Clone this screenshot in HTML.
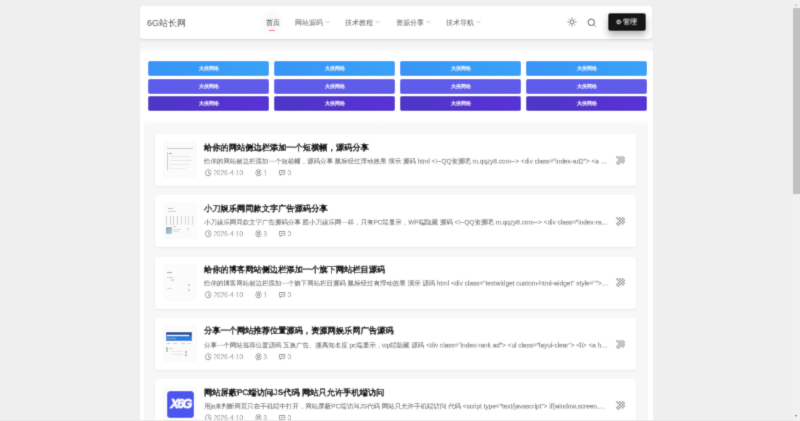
<!DOCTYPE html>
<html><head><meta charset="utf-8">
<style>
*{box-sizing:border-box;margin:0;padding:0}
html,body{width:800px;height:421px;overflow:hidden}
body{background:#efefef;font-family:"Liberation Sans",sans-serif;position:relative;color:#333}
.abs{position:absolute}
.logo,.nav,#btn,.bb,.thumb{will-change:transform}
#header{left:140px;top:6px;width:512px;height:32.5px;background:#fff;border-radius:3px;box-shadow:0 1px 2px rgba(0,0,0,.1)}
#gap{left:140px;top:38px;width:513px;height:10px;background:linear-gradient(#eeeeee,#f4f4f4 60%,#f6f6f6)}
.logo{left:146.5px;top:17px;font-size:9px;line-height:12px;color:#444;white-space:nowrap}
.nav{top:17px;font-size:7px;line-height:12px;color:#555;white-space:nowrap}
.chev{display:inline-block;margin-left:2px;vertical-align:1px}
.glow{left:258px;top:9px;width:28px;height:28px;border-radius:50%;background:radial-gradient(circle,rgba(0,0,0,.05),rgba(0,0,0,0) 70%)}
.uline{left:269px;top:29.5px;width:6px;height:1.2px;background:#e84a6f;border-radius:1px}
#btn{left:608px;top:12.5px;width:37.5px;height:18px;background:#131313;border-radius:3px;box-shadow:0 4px 7px rgba(0,0,0,.3);color:#fff;font-size:6.5px;line-height:18px;text-align:center;white-space:nowrap}
#banner{left:140px;top:48px;width:513px;height:373px;background:linear-gradient(#f6f6f6,#fff 5px);border-radius:3px 3px 0 0}
.bb{position:absolute;width:121px;height:15.3px;border-radius:2px;color:#fff;font-size:4.5px;line-height:15.3px;text-align:center;font-weight:bold}
.r1{background:linear-gradient(90deg,#3894f7,#37a2f8)}
.r2{background:linear-gradient(90deg,#5d5ceb,#605ae8)}
.r3{background:linear-gradient(90deg,#4e37c6,#5a30d6)}
#list{left:144px;top:119px;width:504px;height:302px;background:linear-gradient(#fff,#f7f7f7 6px)}
.card{position:absolute;left:155px;width:481px;height:52px;background:#fff;border-radius:2px;box-shadow:0 1px 2px rgba(0,0,0,.06),0 0 1px rgba(0,0,0,.06)}
.thumb{position:absolute;left:7.5px;top:7px;width:34px;height:37px;background:#fbfbfb;border-radius:2px;overflow:hidden}
.thumb i{position:absolute;display:block;opacity:.7}
.thumb i.s{opacity:1}
.thumb{filter:blur(0.35px)}
.title{position:absolute;left:49px;top:7.5px;font-size:18px;line-height:24px;font-weight:bold;color:#161616;-webkit-text-stroke:0.5px #161616;white-space:nowrap;transform:scale(0.4578);transform-origin:0 0;will-change:transform}
.exc{position:absolute;left:49px;top:22.8px;font-size:14px;line-height:18px;color:#858585;-webkit-text-stroke:0.4px #858585;white-space:nowrap;width:879px;overflow:hidden;text-overflow:ellipsis;transform:scale(0.4607);transform-origin:0 0;will-change:transform}
.meta{position:absolute;left:50px;top:33.8px;font-size:14px;line-height:18px;color:#888;white-space:nowrap;transform:scale(0.465,0.52);transform-origin:0 0;will-change:transform}
.arrow{position:absolute;left:461px;top:21.7px;width:9px;height:9px}
#sb{left:793px;top:0;width:7px;height:421px;background:#f1f1f1}
#sthumb{left:793px;top:8px;width:7px;height:186px;background:#c1c1c1}
.sarr{position:absolute;left:794.5px;width:0;height:0;border-left:1.6px solid transparent;border-right:1.6px solid transparent}
</style></head><body><svg width="0" height="0" style="position:absolute"><filter id="soft" x="0" y="0" width="100%" height="100%" filterUnits="userSpaceOnUse"><feConvolveMatrix order="3" kernelMatrix="0.0192 0.1001 0.0192 0.1001 0.5228 0.1001 0.0192 0.1001 0.0192" edgeMode="duplicate"/></filter></svg><div id="root" style="position:absolute;left:0;top:0;width:800px;height:421px;overflow:hidden;filter:url(#soft)">
<svg width="0" height="0" style="position:absolute"><defs><pattern id="ck" width="1.4" height="1.4" patternUnits="userSpaceOnUse"><rect width="0.7" height="0.7" fill="#666"/><rect x="0.7" y="0.7" width="0.7" height="0.7" fill="#666"/></pattern></defs></svg>
<div id="gap" class="abs"></div>
<div id="header" class="abs"></div>
<div class="abs logo">6G站长网</div>
<div class="abs glow"></div>
<div class="abs nav" style="left:265.5px;color:#333">首页</div>
<div class="abs uline"></div>
<div class="abs nav" style="left:294.5px">网站源码<svg class="chev" width="5" height="4" viewBox="0 0 5 4"><path d="M0.4 0.8L2.5 3L4.6 0.8" fill="none" stroke="#9a9a9a" stroke-width="0.6"/></svg></div>
<div class="abs nav" style="left:344.5px">技术教程<svg class="chev" width="5" height="4" viewBox="0 0 5 4"><path d="M0.4 0.8L2.5 3L4.6 0.8" fill="none" stroke="#9a9a9a" stroke-width="0.6"/></svg></div>
<div class="abs nav" style="left:396px">资源分享<svg class="chev" width="5" height="4" viewBox="0 0 5 4"><path d="M0.4 0.8L2.5 3L4.6 0.8" fill="none" stroke="#9a9a9a" stroke-width="0.6"/></svg></div>
<div class="abs nav" style="left:446px">技术导航<svg class="chev" width="5" height="4" viewBox="0 0 5 4"><path d="M0.4 0.8L2.5 3L4.6 0.8" fill="none" stroke="#9a9a9a" stroke-width="0.6"/></svg></div>
<svg class="abs" style="left:567px;top:17px" width="10" height="10" viewBox="0 0 10 10"><circle cx="5" cy="5" r="2" fill="none" stroke="#444" stroke-width="0.8"/><g stroke="#444" stroke-width="0.8"><line x1="5" y1="0.5" x2="5" y2="1.8"/><line x1="5" y1="8.2" x2="5" y2="9.5"/><line x1="0.5" y1="5" x2="1.8" y2="5"/><line x1="8.2" y1="5" x2="9.5" y2="5"/><line x1="1.8" y1="1.8" x2="2.7" y2="2.7"/><line x1="7.3" y1="7.3" x2="8.2" y2="8.2"/><line x1="1.8" y1="8.2" x2="2.7" y2="7.3"/><line x1="7.3" y1="2.7" x2="8.2" y2="1.8"/></g></svg>
<svg class="abs" style="left:586.5px;top:17.5px" width="10" height="10" viewBox="0 0 10 10"><circle cx="4.3" cy="4.3" r="3.2" fill="none" stroke="#333" stroke-width="0.9"/><line x1="6.6" y1="6.6" x2="8.6" y2="8.6" stroke="#333" stroke-width="0.9"/></svg>
<div id="btn" class="abs"><span style="font-size:6px">⚙</span>&nbsp;管理</div>

<div id="banner" class="abs">
<div class="bb r1" style="left:8.0px;top:13.3px">大侠网络</div>
<div class="bb r1" style="left:133.7px;top:13.3px">大侠网络</div>
<div class="bb r1" style="left:260.0px;top:13.3px">大侠网络</div>
<div class="bb r1" style="left:386.0px;top:13.3px">大侠网络</div>
<div class="bb r2" style="left:8.0px;top:30.6px">大侠网络</div>
<div class="bb r2" style="left:133.7px;top:30.6px">大侠网络</div>
<div class="bb r2" style="left:260.0px;top:30.6px">大侠网络</div>
<div class="bb r2" style="left:386.0px;top:30.6px">大侠网络</div>
<div class="bb r3" style="left:8.0px;top:48.4px">大侠网络</div>
<div class="bb r3" style="left:133.7px;top:48.4px">大侠网络</div>
<div class="bb r3" style="left:260.0px;top:48.4px">大侠网络</div>
<div class="bb r3" style="left:386.0px;top:48.4px">大侠网络</div>
</div>
<div id="list" class="abs"></div>
<div class="card" style="top:134.0px"><div class="thumb"><i style="left:3.5px;top:7px;width:26px;height:0.8px;background:#aaa"></i><i style="left:3.5px;top:11px;width:1.6px;height:18px;background:#a8b4cc"></i><i style="left:6px;top:11.5px;width:3px;height:1px;background:#666"></i><i style="left:7px;top:15px;width:20px;height:0.6px;background:#ddd"></i><i style="left:7px;top:19px;width:22px;height:0.6px;background:#ddd"></i><i style="left:7px;top:23px;width:20px;height:0.6px;background:#e3e3e3"></i><i style="left:7px;top:27px;width:16px;height:0.6px;background:#e6e6e6"></i></div><div class="title">给你的网站侧边栏添加一个短横幅，源码分享</div><div class="exc">给你的网站侧边栏添加一个短横幅，源码分享 鼠标经过浮动效果 演示 源码 html &lt;!--QQ资源吧 m.qqzy8.com--&gt; &lt;div class="index-ad2"&gt; &lt;a href=""&gt; &lt;img src=""&gt;</div><div class="meta"><svg width="14" height="14" viewBox="0 0 10 10" style="vertical-align:-2px"><circle cx="5" cy="5" r="4.2" fill="none" stroke="#7a7a7a" stroke-width="1"/><path d="M5 2.5V5.2L6.8 6.5" fill="none" stroke="#7a7a7a" stroke-width="1"/></svg> 2026-4-10<span style="display:inline-block;width:26px"></span><svg width="14" height="14" viewBox="0 0 10 10" style="vertical-align:-2px"><circle cx="5" cy="5" r="4.2" fill="none" stroke="#7a7a7a" stroke-width="1"/><circle cx="5" cy="5" r="1.8" fill="none" stroke="#7a7a7a" stroke-width="1"/></svg> 1<span style="display:inline-block;width:26px"></span><svg width="14" height="14" viewBox="0 0 10 10" style="vertical-align:-2px"><path d="M1 2h8v5H4L1.8 9V7H1z" fill="none" stroke="#7a7a7a" stroke-width="1"/><line x1="3" y1="4.5" x2="7" y2="4.5" stroke="#777" stroke-width="0.8"/></svg> 0</div><svg class="arrow" viewBox="0 0 9 9" width="9" height="9"><g fill="#7c7c7c"><rect x="0.20" y="0.20" width="1.45" height="1.45"/><rect x="0.20" y="6.00" width="1.45" height="1.45"/><rect x="1.65" y="1.65" width="1.45" height="1.45"/><rect x="1.65" y="4.55" width="1.45" height="1.45"/><rect x="1.65" y="7.45" width="1.45" height="1.45"/><rect x="3.10" y="0.20" width="1.45" height="1.45"/><rect x="3.10" y="3.10" width="1.45" height="1.45"/><rect x="3.10" y="6.00" width="1.45" height="1.45"/><rect x="4.55" y="1.65" width="1.45" height="1.45"/><rect x="4.55" y="4.55" width="1.45" height="1.45"/><rect x="6.00" y="0.20" width="1.45" height="1.45"/><rect x="6.00" y="3.10" width="1.45" height="1.45"/><rect x="6.00" y="6.00" width="1.45" height="1.45"/><rect x="7.45" y="1.65" width="1.45" height="1.45"/><rect x="7.45" y="4.55" width="1.45" height="1.45"/></g></svg></div>
<div class="card" style="top:195.3px"><div class="thumb"><i style="left:5px;top:6px;width:5px;height:0.8px;background:#999"></i><i style="left:5px;top:9px;width:8px;height:0.6px;background:#bbb"></i><i style="left:2.5px;top:14px;width:5px;height:9px;border:0.8px solid #b8bccb;border-width:0 0.9px"></i><i style="left:10px;top:14px;width:5px;height:9px;border:0.8px solid #b8b8c8;border-width:0 0.9px"></i><i style="left:17.5px;top:14px;width:5px;height:9px;border:0.8px solid #c4c4cc;border-width:0 0.9px"></i><i style="left:25px;top:14px;width:5px;height:9px;border:0.8px solid #d0c4cc;border-width:0 0.9px"></i><i style="left:2.5px;top:25px;width:6px;height:6.5px;background:linear-gradient(135deg,#5a7a90,#80c8d0)"></i><i style="left:10px;top:23.5px;width:3px;height:0.8px;background:#e0a0b0"></i><i style="left:10px;top:27px;width:8px;height:0.6px;background:#ccc"></i><i style="left:10px;top:29px;width:6px;height:0.6px;background:#ccc"></i><i style="left:24px;top:26px;width:2px;height:2px;background:#ccc"></i></div><div class="title">小刀娱乐网同款文字广告源码分享</div><div class="exc">小刀娱乐网同款文字广告源码分享 跟小刀娱乐网一样，只有PC端显示，WP端隐藏 源码 &lt;!--QQ资源吧 m.qqzy8.com--&gt; &lt;div class="index-rank"&gt; &lt;ul class="layui"&gt;</div><div class="meta"><svg width="14" height="14" viewBox="0 0 10 10" style="vertical-align:-2px"><circle cx="5" cy="5" r="4.2" fill="none" stroke="#7a7a7a" stroke-width="1"/><path d="M5 2.5V5.2L6.8 6.5" fill="none" stroke="#7a7a7a" stroke-width="1"/></svg> 2026-4-10<span style="display:inline-block;width:26px"></span><svg width="14" height="14" viewBox="0 0 10 10" style="vertical-align:-2px"><circle cx="5" cy="5" r="4.2" fill="none" stroke="#7a7a7a" stroke-width="1"/><circle cx="5" cy="5" r="1.8" fill="none" stroke="#7a7a7a" stroke-width="1"/></svg> 3<span style="display:inline-block;width:26px"></span><svg width="14" height="14" viewBox="0 0 10 10" style="vertical-align:-2px"><path d="M1 2h8v5H4L1.8 9V7H1z" fill="none" stroke="#7a7a7a" stroke-width="1"/><line x1="3" y1="4.5" x2="7" y2="4.5" stroke="#777" stroke-width="0.8"/></svg> 0</div><svg class="arrow" viewBox="0 0 9 9" width="9" height="9"><g fill="#7c7c7c"><rect x="0.20" y="0.20" width="1.45" height="1.45"/><rect x="0.20" y="6.00" width="1.45" height="1.45"/><rect x="1.65" y="1.65" width="1.45" height="1.45"/><rect x="1.65" y="4.55" width="1.45" height="1.45"/><rect x="1.65" y="7.45" width="1.45" height="1.45"/><rect x="3.10" y="0.20" width="1.45" height="1.45"/><rect x="3.10" y="3.10" width="1.45" height="1.45"/><rect x="3.10" y="6.00" width="1.45" height="1.45"/><rect x="4.55" y="1.65" width="1.45" height="1.45"/><rect x="4.55" y="4.55" width="1.45" height="1.45"/><rect x="6.00" y="0.20" width="1.45" height="1.45"/><rect x="6.00" y="3.10" width="1.45" height="1.45"/><rect x="6.00" y="6.00" width="1.45" height="1.45"/><rect x="7.45" y="1.65" width="1.45" height="1.45"/><rect x="7.45" y="4.55" width="1.45" height="1.45"/></g></svg></div>
<div class="card" style="top:256.6px"><div class="thumb"><i style="left:3.5px;top:8px;width:5px;height:1px;background:#777"></i><i style="left:3.5px;top:13px;width:6px;height:0.8px;background:#bbb"></i><i style="left:8px;top:15px;width:3px;height:2px;background:#ccc"></i><i style="left:25px;top:20px;width:1.5px;height:2px;background:#bbb"></i><i style="left:25px;top:25px;width:1.5px;height:1.5px;background:#bbb"></i><i style="left:4px;top:24px;width:5px;height:0.8px;background:#ccc"></i></div><div class="title">给你的博客网站侧边栏添加一个旗下网站栏目源码</div><div class="exc">给你的博客网站侧边栏添加一个旗下网站栏目源码 鼠标经过有浮动效果 演示 源码 html &lt;div class="textwidget custom-html-widget" style=""&gt; &lt;div class="box"&gt;</div><div class="meta"><svg width="14" height="14" viewBox="0 0 10 10" style="vertical-align:-2px"><circle cx="5" cy="5" r="4.2" fill="none" stroke="#7a7a7a" stroke-width="1"/><path d="M5 2.5V5.2L6.8 6.5" fill="none" stroke="#7a7a7a" stroke-width="1"/></svg> 2026-4-10<span style="display:inline-block;width:26px"></span><svg width="14" height="14" viewBox="0 0 10 10" style="vertical-align:-2px"><circle cx="5" cy="5" r="4.2" fill="none" stroke="#7a7a7a" stroke-width="1"/><circle cx="5" cy="5" r="1.8" fill="none" stroke="#7a7a7a" stroke-width="1"/></svg> 1<span style="display:inline-block;width:26px"></span><svg width="14" height="14" viewBox="0 0 10 10" style="vertical-align:-2px"><path d="M1 2h8v5H4L1.8 9V7H1z" fill="none" stroke="#7a7a7a" stroke-width="1"/><line x1="3" y1="4.5" x2="7" y2="4.5" stroke="#777" stroke-width="0.8"/></svg> 0</div><svg class="arrow" viewBox="0 0 9 9" width="9" height="9"><g fill="#7c7c7c"><rect x="0.20" y="0.20" width="1.45" height="1.45"/><rect x="0.20" y="6.00" width="1.45" height="1.45"/><rect x="1.65" y="1.65" width="1.45" height="1.45"/><rect x="1.65" y="4.55" width="1.45" height="1.45"/><rect x="1.65" y="7.45" width="1.45" height="1.45"/><rect x="3.10" y="0.20" width="1.45" height="1.45"/><rect x="3.10" y="3.10" width="1.45" height="1.45"/><rect x="3.10" y="6.00" width="1.45" height="1.45"/><rect x="4.55" y="1.65" width="1.45" height="1.45"/><rect x="4.55" y="4.55" width="1.45" height="1.45"/><rect x="6.00" y="0.20" width="1.45" height="1.45"/><rect x="6.00" y="3.10" width="1.45" height="1.45"/><rect x="6.00" y="6.00" width="1.45" height="1.45"/><rect x="7.45" y="1.65" width="1.45" height="1.45"/><rect x="7.45" y="4.55" width="1.45" height="1.45"/></g></svg></div>
<div class="card" style="top:317.9px"><div class="thumb"><i class="s" style="left:3px;top:7px;width:26px;height:3px;background:#2554a6"></i><i class="s" style="left:3px;top:10px;width:26px;height:1.2px;background:#2d6cc4"></i><i class="s" style="left:3.5px;top:10.3px;width:22px;height:0.9px;background:#f2f6fc"></i><i class="s" style="left:3px;top:11.2px;width:26px;height:4.6px;background:#2b80d8"></i><i class="s" style="left:3px;top:13.2px;width:10px;height:1px;background:#5fb0e8"></i><i style="left:4px;top:17.5px;width:3px;height:0.8px;background:#e08090"></i><i style="left:10px;top:17.5px;width:4px;height:0.6px;background:#d8b0b8"></i><i style="left:18px;top:17.5px;width:4px;height:0.6px;background:#bbb"></i><i style="left:24px;top:17.5px;width:4px;height:0.6px;background:#ccc"></i><i style="left:3px;top:22px;width:1.6px;height:5px;background:#80b8a8"></i><i style="left:6px;top:23px;width:4px;height:0.6px;background:#bbb"></i><i style="left:8px;top:26px;width:12px;height:0.6px;background:#ddd"></i><i style="left:8px;top:29px;width:12px;height:0.6px;background:#ddd"></i><i style="left:22px;top:26px;width:1.5px;height:1.5px;background:#999"></i><i style="left:22px;top:29px;width:1.5px;height:1.5px;background:#999"></i></div><div class="title">分享一个网站推荐位置源码，资源网娱乐网广告源码</div><div class="exc">分享一个网站推荐位置源码 互换广告、提高知名度 pc端显示，wp端隐藏 源码 &lt;div class="index-rank ad"&gt; &lt;ul class="layui-clear"&gt; &lt;li&gt; &lt;a href=""&gt; &lt;img&gt;</div><div class="meta"><svg width="14" height="14" viewBox="0 0 10 10" style="vertical-align:-2px"><circle cx="5" cy="5" r="4.2" fill="none" stroke="#7a7a7a" stroke-width="1"/><path d="M5 2.5V5.2L6.8 6.5" fill="none" stroke="#7a7a7a" stroke-width="1"/></svg> 2026-4-10<span style="display:inline-block;width:26px"></span><svg width="14" height="14" viewBox="0 0 10 10" style="vertical-align:-2px"><circle cx="5" cy="5" r="4.2" fill="none" stroke="#7a7a7a" stroke-width="1"/><circle cx="5" cy="5" r="1.8" fill="none" stroke="#7a7a7a" stroke-width="1"/></svg> 3<span style="display:inline-block;width:26px"></span><svg width="14" height="14" viewBox="0 0 10 10" style="vertical-align:-2px"><path d="M1 2h8v5H4L1.8 9V7H1z" fill="none" stroke="#7a7a7a" stroke-width="1"/><line x1="3" y1="4.5" x2="7" y2="4.5" stroke="#777" stroke-width="0.8"/></svg> 0</div><svg class="arrow" viewBox="0 0 9 9" width="9" height="9"><g fill="#7c7c7c"><rect x="0.20" y="0.20" width="1.45" height="1.45"/><rect x="0.20" y="6.00" width="1.45" height="1.45"/><rect x="1.65" y="1.65" width="1.45" height="1.45"/><rect x="1.65" y="4.55" width="1.45" height="1.45"/><rect x="1.65" y="7.45" width="1.45" height="1.45"/><rect x="3.10" y="0.20" width="1.45" height="1.45"/><rect x="3.10" y="3.10" width="1.45" height="1.45"/><rect x="3.10" y="6.00" width="1.45" height="1.45"/><rect x="4.55" y="1.65" width="1.45" height="1.45"/><rect x="4.55" y="4.55" width="1.45" height="1.45"/><rect x="6.00" y="0.20" width="1.45" height="1.45"/><rect x="6.00" y="3.10" width="1.45" height="1.45"/><rect x="6.00" y="6.00" width="1.45" height="1.45"/><rect x="7.45" y="1.65" width="1.45" height="1.45"/><rect x="7.45" y="4.55" width="1.45" height="1.45"/></g></svg></div>
<div class="card" style="top:379.2px"><div class="thumb"><i class="s" style="left:3.5px;top:5px;width:27px;height:27px;border-radius:3.5px;background:#4b55ef"></i><b style="position:absolute;left:5px;top:12px;width:25px;text-align:center;color:#fff;font:italic bold 12.5px/12px 'Liberation Sans',sans-serif;letter-spacing:-1.6px;-webkit-text-stroke:0.5px #fff">X6G</b></div><div class="title">网站屏蔽PC端访问JS代码 网站只允许手机端访问</div><div class="exc">用js来判断网页只在手机端中打开，网站屏蔽PC端访问JS代码 网站只允许手机端访问 代码 &lt;script type="text/javascript"&gt; if(window.screen.width &lt; 800)</div><div class="meta"><svg width="14" height="14" viewBox="0 0 10 10" style="vertical-align:-2px"><circle cx="5" cy="5" r="4.2" fill="none" stroke="#7a7a7a" stroke-width="1"/><path d="M5 2.5V5.2L6.8 6.5" fill="none" stroke="#7a7a7a" stroke-width="1"/></svg> 2026-4-10<span style="display:inline-block;width:26px"></span><svg width="14" height="14" viewBox="0 0 10 10" style="vertical-align:-2px"><circle cx="5" cy="5" r="4.2" fill="none" stroke="#7a7a7a" stroke-width="1"/><circle cx="5" cy="5" r="1.8" fill="none" stroke="#7a7a7a" stroke-width="1"/></svg> 3<span style="display:inline-block;width:26px"></span><svg width="14" height="14" viewBox="0 0 10 10" style="vertical-align:-2px"><path d="M1 2h8v5H4L1.8 9V7H1z" fill="none" stroke="#7a7a7a" stroke-width="1"/><line x1="3" y1="4.5" x2="7" y2="4.5" stroke="#777" stroke-width="0.8"/></svg> 0</div><svg class="arrow" viewBox="0 0 9 9" width="9" height="9"><g fill="#7c7c7c"><rect x="0.20" y="0.20" width="1.45" height="1.45"/><rect x="0.20" y="6.00" width="1.45" height="1.45"/><rect x="1.65" y="1.65" width="1.45" height="1.45"/><rect x="1.65" y="4.55" width="1.45" height="1.45"/><rect x="1.65" y="7.45" width="1.45" height="1.45"/><rect x="3.10" y="0.20" width="1.45" height="1.45"/><rect x="3.10" y="3.10" width="1.45" height="1.45"/><rect x="3.10" y="6.00" width="1.45" height="1.45"/><rect x="4.55" y="1.65" width="1.45" height="1.45"/><rect x="4.55" y="4.55" width="1.45" height="1.45"/><rect x="6.00" y="0.20" width="1.45" height="1.45"/><rect x="6.00" y="3.10" width="1.45" height="1.45"/><rect x="6.00" y="6.00" width="1.45" height="1.45"/><rect x="7.45" y="1.65" width="1.45" height="1.45"/><rect x="7.45" y="4.55" width="1.45" height="1.45"/></g></svg></div>
<div id="sb" class="abs"></div>
<div id="sthumb" class="abs"></div>
<div class="sarr" style="top:3.5px;border-bottom:2.2px solid #a3a3a3"></div>
<div class="sarr" style="top:415.3px;border-top:2.2px solid #505050"></div>
<div class="abs" style="left:0;top:420px;width:793px;height:1px;background:#e8e8e8"></div>
</div></body></html>
